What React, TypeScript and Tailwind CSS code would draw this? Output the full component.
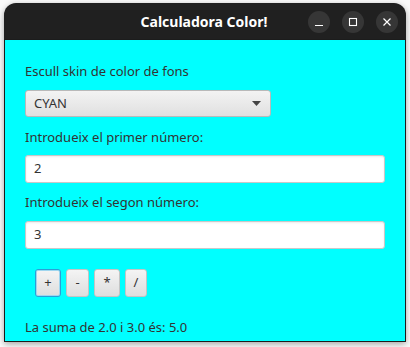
import React from "react";

const font = { fontFamily: '"Noto Sans", "Open Sans", sans-serif' };

function Btn({ label, w, focused }: { label: string; w: string; focused?: boolean }) {
  return (
    <div
      className={`${w} h-[28px] rounded-[3px] flex items-center justify-center text-[13px] text-[#333333] bg-gradient-to-b from-[#f4f4f4] to-[#dedede] ${
        focused ? "border border-[#2a9fd6] shadow-[inset_0_0_0_1px_#9fd6ef]" : "border border-[#c4c4c4]"
      }`}
    >
      {label}
    </div>
  );
}

export default function App() {
  return (
    <div className="w-[410px] h-[347px] bg-[#fafafa] pt-[3px] pl-[4px]" style={font}>
      <div className="w-[402px] h-[339px] rounded-t-[12px] bg-[#202020] flex flex-col overflow-hidden shadow-[0_2px_6px_rgba(0,0,0,0.35)]">
        <div className="h-[36px] relative flex items-center justify-center shrink-0">
          <span className="text-white font-bold text-[14px] -ml-[2px] mt-[1px]">Calculadora Color!</span>
          <div className="absolute right-[8px] top-[8px] flex gap-[12px]">
            <div className="w-[22px] h-[22px] rounded-full bg-[#363636] flex items-center justify-center">
              <svg width="10" height="10" viewBox="0 0 10 10">
                <line x1="1" y1="8.5" x2="9" y2="8.5" stroke="white" strokeWidth="1.2" />
              </svg>
            </div>
            <div className="w-[22px] h-[22px] rounded-full bg-[#363636] flex items-center justify-center">
              <svg width="10" height="10" viewBox="0 0 10 10">
                <rect x="1.5" y="1.5" width="7" height="7" fill="none" stroke="white" strokeWidth="1.1" />
              </svg>
            </div>
            <div className="w-[22px] h-[22px] rounded-full bg-[#363636] flex items-center justify-center">
              <svg width="10" height="10" viewBox="0 0 10 10">
                <path d="M1.5 1.5 L8.5 8.5 M8.5 1.5 L1.5 8.5" stroke="white" strokeWidth="1.2" />
              </svg>
            </div>
          </div>
        </div>
        <div className="flex-1 border border-[#1c1c1c] bg-[#00ffff] flex flex-col pl-[20px] pr-[19px] pt-[22px] text-[13px] text-[#333333]">
          <div className="h-[18px] leading-[18px]">Escull skin de color de fons</div>
          <div className="mt-[10px] w-[246px] h-[27px] rounded-[3px] border border-[#b9b9b9] bg-gradient-to-b from-[#f3f3f3] to-[#e0e0e0] flex items-center justify-between pl-[8px] pr-[9px]">
            <span className="text-[#333333] text-[13px]">CYAN</span>
            <svg width="9" height="5" viewBox="0 0 9 5">
              <path d="M0 0 L9 0 L4.5 5 Z" fill="#444" />
            </svg>
          </div>
          <div className="mt-[11px] h-[18px] leading-[18px]">Introdueix el primer número:</div>
          <div className="mt-[9px] w-[360px] h-[28px] rounded-[3px] border border-[#c8c8c8] bg-white flex items-center pl-[8px] shadow-[inset_0_1px_2px_rgba(0,0,0,0.08)]">
            2
          </div>
          <div className="mt-[10px] h-[18px] leading-[18px]">Introdueix el segon número:</div>
          <div className="mt-[10px] w-[360px] h-[28px] rounded-[3px] border border-[#c8c8c8] bg-white flex items-center pl-[8px] shadow-[inset_0_1px_2px_rgba(0,0,0,0.08)]">
            3
          </div>
          <div className="mt-[20px] ml-[10px] flex gap-[5px]">
            <Btn label="+" w="w-[26px]" focused />
            <Btn label="-" w="w-[23px]" />
            <Btn label="*" w="w-[26px]" />
            <Btn label="/" w="w-[22px]" />
          </div>
          <div className="mt-[21px] h-[18px] leading-[18px]">La suma de 2.0 i 3.0 és: 5.0</div>
        </div>
      </div>
    </div>
  );
}
